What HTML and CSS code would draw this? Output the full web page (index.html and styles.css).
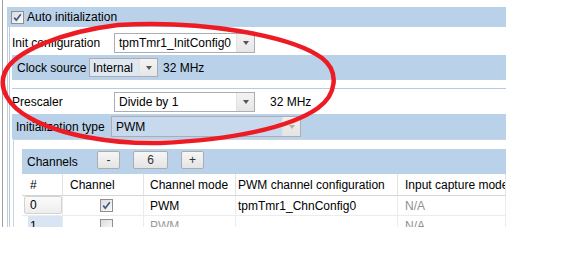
FILE: index.html
```html
<!DOCTYPE html>
<html>
<head>
<meta charset="utf-8">
<link rel="stylesheet" href="styles.css">
</head>
<body>
<div class="panel">
  <div class="band band-auto">
    <span class="cb cb-auto checked"><svg viewBox="0 0 11 11" width="11" height="11"><path d="M2.2 5.6 L4.3 8.2 L8.8 2.2" fill="none" stroke="#3d5a8a" stroke-width="1.7"/></svg></span>
    <span>Auto initialization</span>
  </div>
  <div class="g1">
    <div class="g2">
      <div class="row row-init">
        <span class="lbl lbl-init">Init configuration</span>
        <div class="combo combo-init"><span class="combo-text">tpmTmr1_InitConfig0</span><span class="combo-btn"><i class="arrow"></i></span></div>
      </div>
      <div class="clock">
        <div class="band band-clock">
          <span class="lbl lbl-clock">Clock source</span>
          <div class="combo combo-clock"><span class="combo-text">Internal</span><span class="combo-btn"><i class="arrow"></i></span></div>
          <span class="freq freq-clock">32 MHz</span>
        </div>
      </div>
      <div class="row row-pres">
        <span class="lbl lbl-init">Prescaler</span>
        <div class="combo combo-init"><span class="combo-text">Divide by 1</span><span class="combo-btn"><i class="arrow"></i></span></div>
        <span class="freq freq-pres">32 MHz</span>
      </div>
      <div class="band band-type">
        <span class="lbl lbl-type">Initialization type</span>
        <div class="combo combo-type"><span class="combo-text">PWM</span><span class="combo-btn"><i class="arrow arrow-dis"></i></span></div>
      </div>
      <div class="g4">
        <div class="band band-ch">
          <span class="lbl lbl-ch">Channels</span>
          <span class="btn">-</span>
          <span class="btn num">6</span>
          <span class="btn">+</span>
        </div>
        <div class="grid thead">
          <div class="th c1">#</div>
          <div class="th c2">Channel</div>
          <div class="th c3">Channel mode</div>
          <div class="th c4">PWM channel configuration</div>
          <div class="th c5">Input capture mode</div>
        </div>
        <div class="grid trow">
          <div class="td c1"><span class="idx idx-0">0</span></div>
          <div class="td c2"><span class="cb checked"><svg viewBox="0 0 11 11" width="11" height="11"><path d="M2.2 5.6 L4.3 8.2 L8.8 2.2" fill="none" stroke="#3d5a8a" stroke-width="1.7"/></svg></span></div>
          <div class="td c3">PWM</div>
          <div class="td c4">tpmTmr1_ChnConfig0</div>
          <div class="td c5 dim">N/A</div>
        </div>
        <div class="grid trow">
          <div class="td c1"><span class="idx idx-1">1</span></div>
          <div class="td c2"><span class="cb"></span></div>
          <div class="td c3 dim2">PWM</div>
          <div class="td c4"></div>
          <div class="td c5 dim">N/A</div>
        </div>
      </div>
    </div>
  </div>
</div>
<svg class="annot" width="561" height="275" viewBox="0 0 561 275">
  <path d="M118 25 C200 20 290 35 322 58 C340 72 336 95 318 108 C290 128 230 140 160 143 C110 144 60 135 30 118 C8 106 -2 88 5 72 C14 52 60 32 118 25 Z" fill="none" stroke="#ed1c24" stroke-width="4.5"/>
</svg>
</body>
</html>
```
FILE: styles.css
```css
html, body {
  margin: 0;
  padding: 0;
  background: #fff;
}
body {
  font-family: "Liberation Sans", Arial, sans-serif;
  font-size: 12px;
  color: #000;
  width: 561px;
  height: 275px;
  overflow: hidden;
  position: relative;
}
.panel {
  margin-left: 2px;
  width: 504px;
  height: 227px;
  border-left: 1px solid #a0a0a0;
  box-sizing: border-box;
  padding-top: 7px;
  overflow: hidden;
}
.band {
  background: #bad1ea;
  display: flex;
  align-items: center;
  box-sizing: border-box;
}
.band-auto {
  margin-left: 4px;
  height: 20px;
}
.cb {
  display: inline-flex;
  align-items: center;
  justify-content: center;
  width: 13px;
  height: 13px;
  box-sizing: border-box;
  border: 1px solid #8e8f8f;
  background: linear-gradient(135deg, #dcdcdc, #fbfbfb);
}
.cb-auto {
  margin-left: 4px;
  margin-right: 3px;
}
.g1 {
  margin-left: 4px;
  border-left: 1px solid #c3cbd6;
  padding-left: 1px;
  height: 200px;
}
.g2 {
  border-left: 1px solid #b6cae2;
  padding-left: 2px;
  height: 200px;
}
.row {
  display: flex;
  align-items: center;
  box-sizing: border-box;
}
.row-init {
  height: 28px;
  padding-top: 4px;
}
.lbl {
  flex: none;
}
.lbl-init {
  width: 102px;
}
.combo {
  display: flex;
  box-sizing: border-box;
  border: 1px solid #abadb3;
  background: #fff;
  flex: none;
}
.combo-text {
  flex: 1;
  display: flex;
  align-items: center;
  padding-left: 4px;
}
.combo-btn {
  width: 17px;
  display: flex;
  align-items: center;
  justify-content: center;
  background: linear-gradient(#f3f3f3, #e6e6e6);
  border-left: 1px solid #e2e2e2;
}
.arrow {
  width: 0;
  height: 0;
  border-left: 3.5px solid transparent;
  border-right: 3.5px solid transparent;
  border-top: 4px solid #555;
}
.arrow-dis {
  border-top-color: #b0b0b0;
}
.combo-init {
  width: 141px;
  height: 20px;
}
.clock {
  height: 33px;
  border-bottom: 1px solid #b6cae2;
}
.band-clock {
  height: 25px;
  padding-left: 5px;
}
.lbl-clock {
  width: 72px;
}
.combo-clock {
  width: 69px;
  height: 19px;
  background: #dfe7f1;
}
.combo-clock .combo-text {
  padding-left: 3px;
}
.freq-clock {
  margin-left: 5px;
}
.row-pres {
  height: 25px;
}
.freq-pres {
  margin-left: 15px;
}
.band-type {
  height: 25px;
  padding-left: 4px;
}
.lbl-type {
  width: 95px;
}
.combo-type {
  width: 190px;
  height: 21px;
  background: #c8d9ed;
}
.combo-type .combo-btn {
  background: linear-gradient(#f0f0f0, #e4e4e4);
}
.g4 {
  margin-left: 1px;
  border-top: 1px solid #c6d5e7;
  border-left: 1px solid #c6d5e7;
  padding-left: 8px;
  padding-top: 9px;
}
.band-ch {
  height: 25px;
  padding-left: 5px;
}
.lbl-ch {
  width: 70px;
}
.btn {
  display: inline-flex;
  align-items: center;
  justify-content: center;
  width: 23px;
  height: 18px;
  margin-top: -3px;
  box-sizing: border-box;
  border: 1px solid #acacac;
  border-radius: 2px;
  background: linear-gradient(#f6f6f6, #e4e4e4);
  color: #333;
  margin-right: 13px;
}
.btn.num {
  width: 35px;
}
.grid {
  display: grid;
  grid-template-columns: 41px 81px 92px 162px 108px;
}
.th {
  height: 22px;
  display: flex;
  align-items: center;
  box-sizing: border-box;
  border-right: 1px solid #e3e3e3;
  border-bottom: 1px solid #d5d5d5;
  white-space: nowrap;
  overflow: hidden;
}
.td {
  height: 20px;
  display: flex;
  align-items: center;
  box-sizing: border-box;
  border-right: 1px solid #ececec;
  border-bottom: 1px solid #ececec;
  white-space: nowrap;
  overflow: hidden;
}
.th.c1 { padding-left: 8px; }
.th.c2, .td.c2 { padding-left: 7px; }
.th.c3, .td.c3 { padding-left: 6px; }
.th.c4, .td.c4 { padding-left: 2px; }
.th.c5, .td.c5 { padding-left: 7px; }
.td.c2 { padding-left: 37px; }
.td.c1 {
  padding: 0;
  align-items: stretch;
}
.idx {
  display: flex;
  align-items: center;
  box-sizing: border-box;
  flex: 1;
}
.idx-0 {
  margin-left: 2px;
  padding-left: 5px;
  border: 1px solid #d2d2d2;
  border-radius: 2px;
  background: linear-gradient(#fbfbfb, #ededed);
  margin-bottom: 1px;
}
.idx-1 {
  margin-left: 6px;
  padding-left: 2px;
  background: #d9e5f3;
}
.dim { color: #8f8f8f; }
.dim2 { color: #9a9a9a; }
.annot {
  position: absolute;
  left: 0;
  top: 0;
  pointer-events: none;
}
```
